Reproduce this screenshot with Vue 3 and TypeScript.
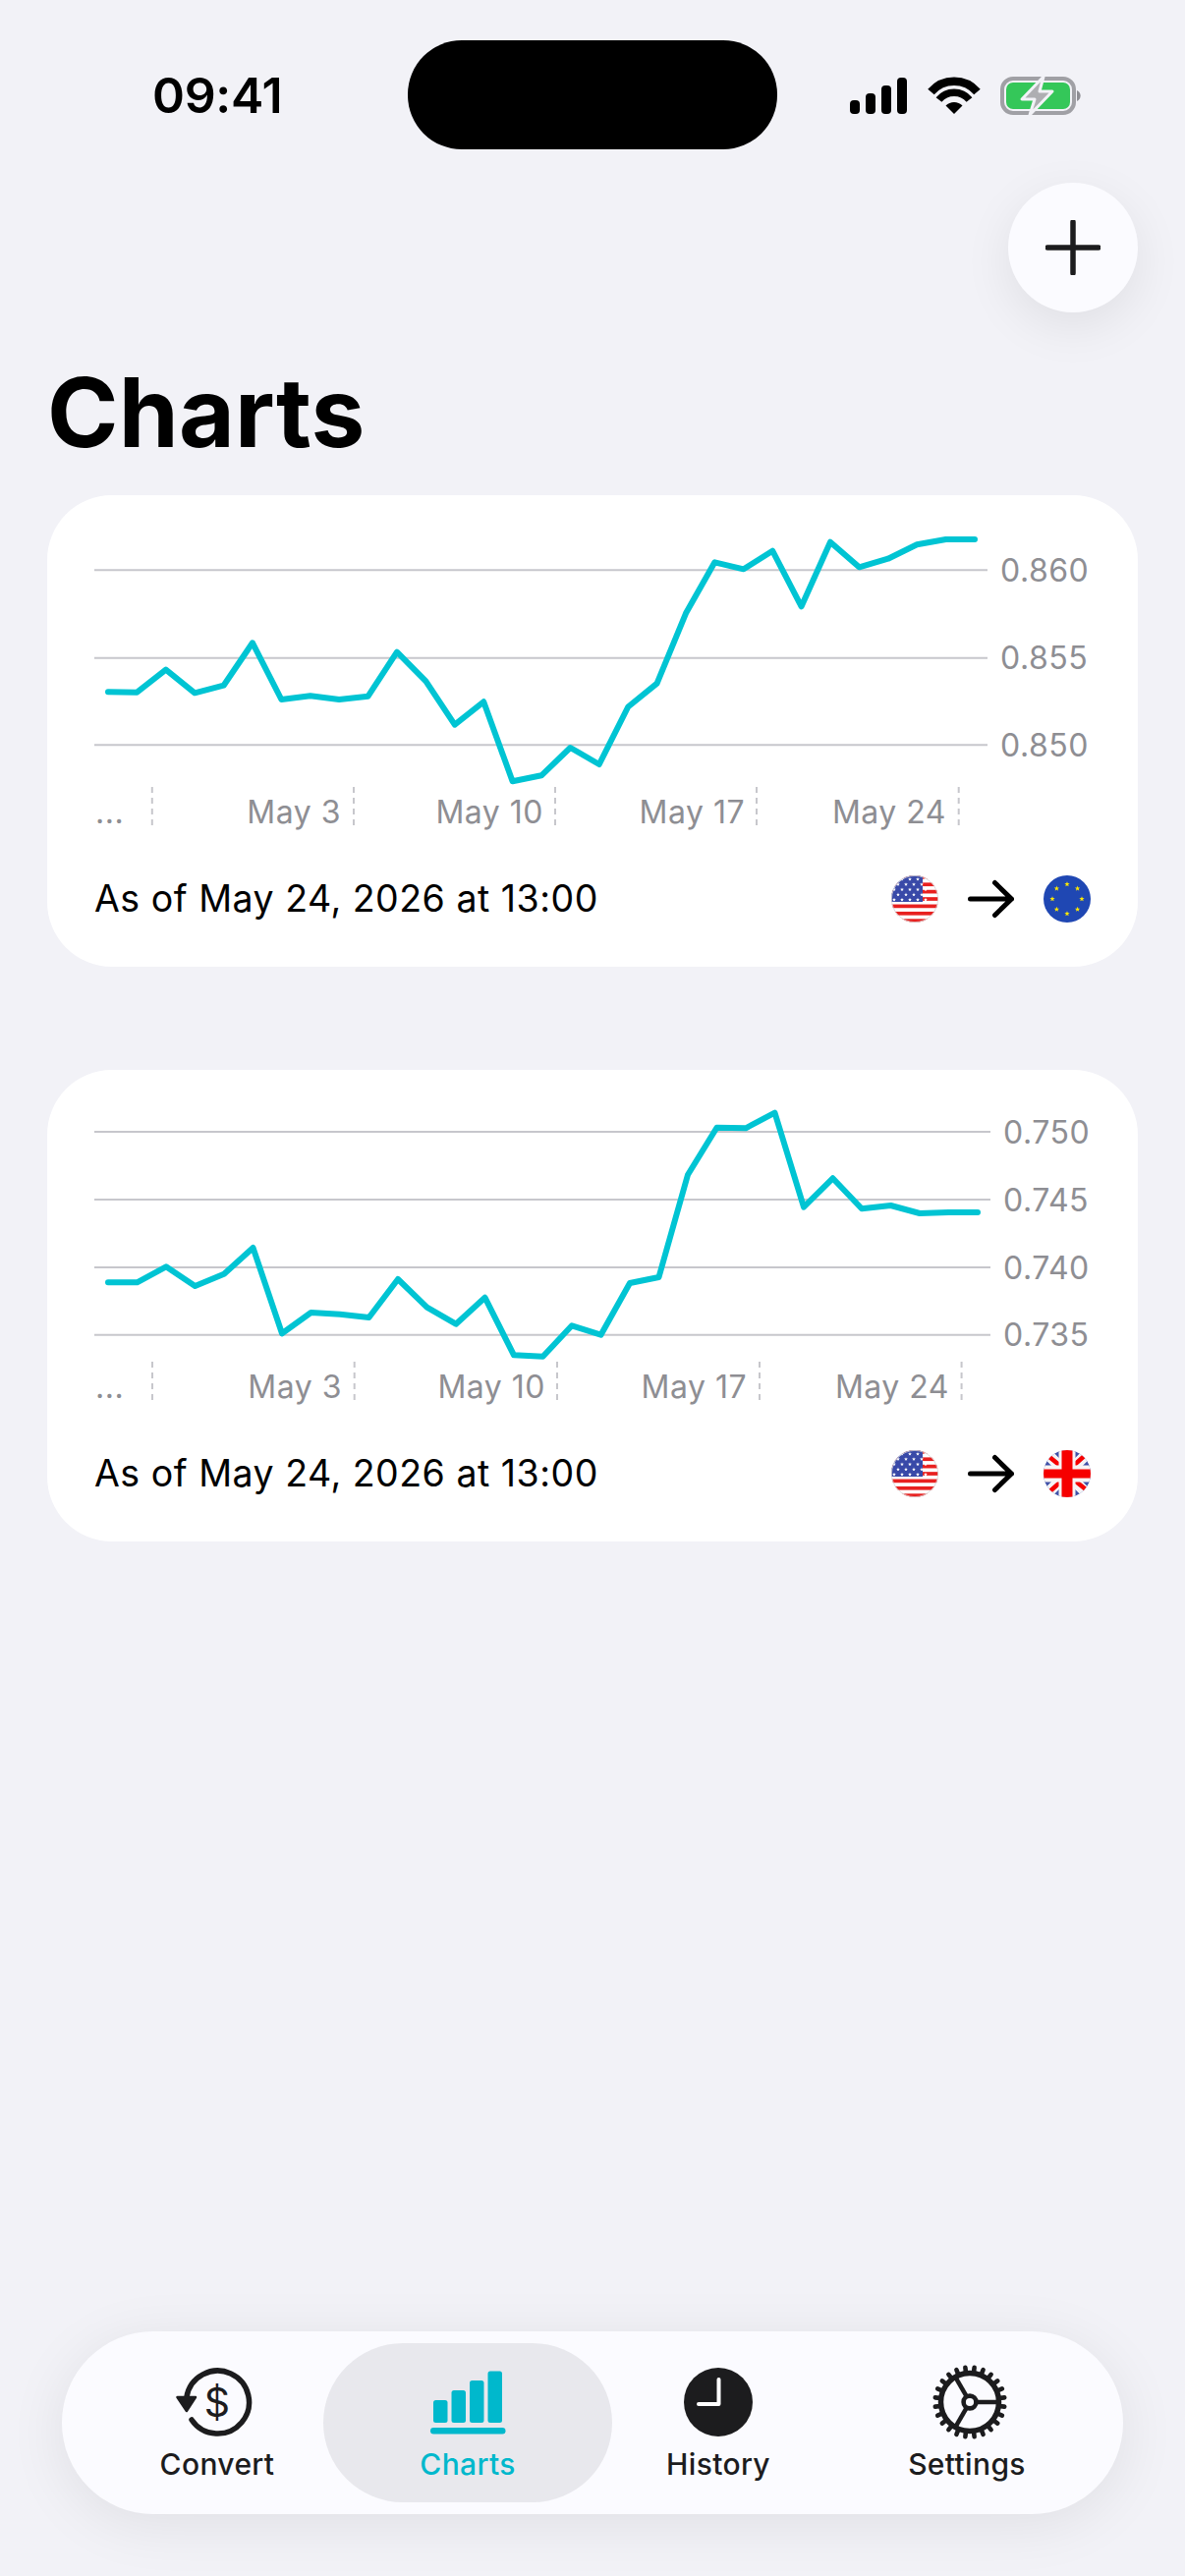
<script setup lang="ts">
interface ChartCard {
  grid: { y: number; label: string }[]
  gridEnd: number
  labelX: number
  line: number[]
  step: number
  ticks: number[]
  dates: { end: number; text: string }[]
  target: string
}

const toPoints = (ys: number[], step: number): string =>
  ys.map((y, i) => `${(62 + i * step).toFixed(1)},${y.toFixed(1)}`).join(' ')

const card1Y = [704.3, 704.7, 681.7, 705.3, 697.7, 654.3, 712, 708.3, 712, 708.7, 663.7, 693.3, 737.7, 714.3, 795.3, 789.3, 761, 778, 719.5, 695.7, 624.3, 572.3, 579.3, 560.7, 617.3, 551.7, 577.3, 568.7, 554.3, 549, 549].map((y) => y - 504)
const card2Y = [1305.3, 1305.3, 1289.3, 1309, 1296.7, 1270, 1357.3, 1336, 1337.7, 1341, 1302, 1330.7, 1347.7, 1320.7, 1379.3, 1380.7, 1349.3, 1358.7, 1306, 1300, 1195.7, 1147.7, 1148.3, 1132.7, 1228.7, 1199.3, 1230.3, 1227, 1235, 1234, 1234].map((y) => y - 1089)

const cards: ChartCard[] = [
  {
    grid: [
      { y: 76.3, label: '0.860' },
      { y: 165.7, label: '0.855' },
      { y: 254.3, label: '0.850' },
    ],
    gridEnd: 957,
    labelX: 970,
    line: card1Y,
    step: 29.4,
    ticks: [106.8, 312, 517, 722, 927.7],
    dates: [
      { end: 299, text: 'May 3' },
      { end: 505, text: 'May 10' },
      { end: 710, text: 'May 17' },
      { end: 915, text: 'May 24' },
    ],
    target: 'eu',
  },
  {
    grid: [
      { y: 63, label: '0.750' },
      { y: 132, label: '0.745' },
      { y: 201, label: '0.740' },
      { y: 269.7, label: '0.735' },
    ],
    gridEnd: 960,
    labelX: 973,
    line: card2Y,
    step: 29.5,
    ticks: [107, 312.7, 519, 725, 930.6],
    dates: [
      { end: 300, text: 'May 3' },
      { end: 507, text: 'May 10' },
      { end: 712, text: 'May 17' },
      { end: 918, text: 'May 24' },
    ],
    target: 'uk',
  },
]

const starPath = (cx: number, cy: number, r: number): string => {
  const pts: string[] = []
  for (let i = 0; i < 10; i++) {
    const rad = i % 2 === 0 ? r : r * 0.42
    const a = -Math.PI / 2 + (i * Math.PI) / 5
    pts.push(`${(cx + rad * Math.cos(a)).toFixed(2)},${(cy + rad * Math.sin(a)).toFixed(2)}`)
  }
  return `M${pts.join('L')}Z`
}

const usStars: string = (() => {
  let d = ''
  for (let row = 0; row < 5; row++) {
    const odd = row % 2 === 1
    const count = odd ? 4 : 5
    for (let c = 0; c < count; c++) {
      d += starPath((odd ? 7 : 3) + c * 8, 4 + row * 5.2, 2)
    }
  }
  return d
})()

const usRedStripes: number[] = [0, 1, 2, 3, 4, 5, 6].map((i) => i * 7.385)

const euStars: string = Array.from({ length: 8 }, (_, i) => {
  const a = (i * Math.PI) / 4
  return starPath(24 + 15 * Math.sin(a), 24 - 15 * Math.cos(a), 2.8)
}).join('')

const gearTeeth: number[] = Array.from({ length: 24 }, (_, i) => i * 15)
const gearSpokes: number[] = [90, 210, 330]

const tabs = ['Convert', 'Charts', 'History', 'Settings']
</script>

<template>
  <div class="page">
    <header class="status">
      <span class="time">09:41</span>
      <div class="island"></div>
      <svg class="status-icons" width="240" height="44" viewBox="0 0 240 44">
        <rect x="0" y="23" width="10" height="14" rx="4" />
        <rect x="16" y="16" width="10" height="21" rx="4" />
        <rect x="32" y="8" width="10" height="29" rx="4" />
        <rect x="48" y="0" width="10" height="37" rx="4" />
        <g fill="none" stroke="#000" stroke-linecap="butt">
          <path d="M82.5 14.5 A31 31 0 0 1 129.5 14.5" stroke-width="8.5" />
          <path d="M90.5 22.5 A20 20 0 0 1 121.5 22.5" stroke-width="7.5" />
        </g>
        <path d="M106 37 L97.5 28.5 A12 12 0 0 1 114.5 28.5 Z" />
        <rect x="155" y="1" width="73" height="35" rx="11" fill="none" stroke="#a0a0a5" stroke-width="4" />
        <rect x="159" y="5" width="65" height="27" rx="7" fill="#34c759" />
        <path d="M231 13 A6 6 0 0 1 231 24 Z" fill="#8e8e93" />
        <path d="M197 -1 L175 22 L188 22 L183 38 L206 14 L193 14 Z" fill="#aeaeb2" stroke="#f2f2f7" stroke-width="3" stroke-linejoin="round" />
      </svg>
    </header>

    <button class="add" type="button" aria-label="Add">
      <svg width="56" height="56" viewBox="0 0 56 56">
        <path d="M28 2V54M2 28H54" stroke="#1c1c1e" stroke-width="5.5" stroke-linecap="round" />
      </svg>
    </button>

    <h1 class="title">Charts</h1>

    <section class="cards">
      <article v-for="card in cards" :key="card.target" class="card">
        <svg class="chart" width="1110" height="360" viewBox="0 0 1110 360">
          <g v-for="g in card.grid" :key="g.label">
            <line x1="48" :x2="card.gridEnd" :y1="g.y" :y2="g.y" stroke="#c7c7cc" stroke-width="2" />
            <text class="axis" :x="card.labelX" :y="g.y + 11.5">{{ g.label }}</text>
          </g>
          <line
            v-for="t in card.ticks"
            :key="t"
            :x1="t"
            :x2="t"
            y1="297"
            y2="339"
            stroke="#c7c7cc"
            stroke-width="2"
            stroke-dasharray="6 5"
          />
          <text class="axis" x="49" y="333.7">...</text>
          <text
            v-for="d in card.dates"
            :key="d.text"
            class="axis"
            text-anchor="end"
            :x="d.end"
            y="333.7"
          >{{ d.text }}</text>
          <polyline
            :points="toPoints(card.line, card.step)"
            fill="none"
            stroke="#00c4d3"
            stroke-width="6"
            stroke-linecap="round"
            stroke-linejoin="round"
          />
        </svg>
        <footer class="card-foot">
          <span class="asof">As of May 24, 2026 at 13:00</span>
          <div class="pair">
            <svg width="48" height="48" viewBox="0 0 48 48">
              <defs>
                <clipPath :id="'us-' + card.target"><circle cx="24" cy="24" r="24" /></clipPath>
              </defs>
              <g :clip-path="`url(#us-${card.target})`">
                <rect width="48" height="48" fill="#fff" />
                <rect v-for="s in usRedStripes" :key="s" x="0" :y="s" width="48" height="3.7" fill="#e8201f" />
                <rect width="32" height="27" fill="#3949a8" />
                <path :d="usStars" fill="#fff" />
              </g>
              <circle cx="24" cy="24" r="23.6" fill="none" stroke="#d5d5d8" stroke-width="0.8" />
            </svg>
            <svg class="arrow" width="47" height="40" viewBox="0 0 47 40">
              <path d="M2.5 20H44.5M27.5 3.5L44.5 20L27.5 36.5" fill="none" stroke="#000" stroke-width="5" stroke-linecap="round" stroke-linejoin="round" />
            </svg>
            <svg v-if="card.target === 'eu'" width="48" height="48" viewBox="0 0 48 48">
              <circle cx="24" cy="24" r="24" fill="#1f47b3" />
              <path :d="euStars" fill="#ffe900" />
            </svg>
            <svg v-else width="48" height="48" viewBox="0 0 48 48">
              <defs>
                <clipPath id="uk-clip"><circle cx="24" cy="24" r="24" /></clipPath>
              </defs>
              <g clip-path="url(#uk-clip)">
                <rect width="48" height="48" fill="#3f51a8" />
                <path d="M0 0L48 48M48 0L0 48" stroke="#f4f4f6" stroke-width="11" />
                <path d="M0 2L22 20M46 2L28 18M2 46L20 30M48 44L28 28" stroke="#f60000" stroke-width="4.5" />
                <path d="M24 0V48M0 24H48" stroke="#f8f4f4" stroke-width="17" />
                <path d="M24 0V48" stroke="#f60000" stroke-width="11" />
                <path d="M0 24H48" stroke="#f60000" stroke-width="9" />
              </g>
            </svg>
          </div>
        </footer>
      </article>
    </section>

    <nav class="tabbar">
      <div
        v-for="tab in tabs"
        :key="tab"
        class="tab"
        :class="{ active: tab === 'Charts' }"
      >
        <svg v-if="tab === 'Convert'" class="tab-icon" width="84" height="76" viewBox="0 0 84 76">
          <path d="M16 56 A32 32 0 1 0 10.9 33" fill="none" stroke="#1c1c1e" stroke-width="5.5" stroke-linecap="round" />
          <path d="M1.5 33H20L10.9 47Z" fill="#1c1c1e" stroke="#1c1c1e" stroke-width="2.5" stroke-linejoin="round" />
          <text class="dollar" x="42" y="52.5" text-anchor="middle">$</text>
        </svg>
        <svg v-else-if="tab === 'Charts'" class="tab-icon" width="84" height="76" viewBox="0 0 84 76">
          <rect x="7" y="36" width="14.5" height="23" rx="2.5" />
          <rect x="25.5" y="26" width="14.5" height="33" rx="2.5" />
          <rect x="44" y="16" width="14.5" height="43" rx="2.5" />
          <rect x="62.5" y="6.5" width="14.5" height="52.5" rx="2.5" />
          <rect x="4" y="64" width="76.5" height="6.5" rx="3.25" />
        </svg>
        <svg v-else-if="tab === 'History'" class="tab-icon" width="84" height="76" viewBox="0 0 84 76">
          <ellipse cx="42" cy="38" rx="35" ry="35" fill="#1c1c1e" />
          <path d="M42.5 15V40H22" fill="none" stroke="#fff" stroke-width="4" stroke-linecap="round" stroke-linejoin="round" />
        </svg>
        <svg v-else class="tab-icon" width="84" height="76" viewBox="0 0 84 76">
          <g transform="translate(44 38)" stroke="#1c1c1e" fill="none">
            <circle r="29.5" stroke-width="5.5" />
            <line
              v-for="a in gearTeeth"
              :key="a"
              x1="0"
              y1="-30"
              x2="0"
              y2="-35.5"
              stroke-width="4.6"
              stroke-linecap="round"
              :transform="`rotate(${a + 7.5})`"
            />
            <line
              v-for="a in gearSpokes"
              :key="a"
              x1="0"
              y1="-7"
              x2="0"
              y2="-29"
              stroke-width="4.5"
              :transform="`rotate(${a})`"
            />
            <circle r="6.4" stroke-width="4.6" />
          </g>
        </svg>
        <span class="tab-label">{{ tab }}</span>
      </div>
    </nav>
  </div>
</template>

<style scoped>
.page {
  position: relative;
  width: 1206px;
  height: 2622px;
  display: flex;
  flex-direction: column;
  overflow: hidden;
  background: #f2f2f7;
  font-family: Inter, "Liberation Sans", sans-serif;
  color: #000;
}
.status {
  display: flex;
  align-items: center;
  height: 111px;
  margin-top: 41px;
  flex: none;
}
.time {
  flex: none;
  width: 415px;
  padding-left: 155px;
  box-sizing: border-box;
  font-size: 50px;
  font-weight: 600;
  line-height: 60px;
  letter-spacing: -0.3px;
}
.island {
  width: 376px;
  height: 111px;
  border-radius: 55px;
  background: #000;
  flex: none;
}
.status-icons {
  margin-left: 74px;
  margin-top: 9px;
  overflow: visible;
  flex: none;
}
.add {
  align-self: flex-end;
  flex: none;
  width: 132px;
  height: 132px;
  margin: 34px 48px 0 0;
  padding: 0;
  border: 0;
  border-radius: 50%;
  background: #fbfbff;
  box-shadow: 0 14px 50px rgba(0, 0, 0, 0.08);
  display: flex;
  align-items: center;
  justify-content: center;
}
.title {
  margin: 40px 0 22px 48px;
  font-size: 98px;
  line-height: 124px;
  font-weight: 700;
  letter-spacing: 0.2px;
  flex: none;
}
.cards {
  display: flex;
  flex-direction: column;
  gap: 105px;
  margin: 0 48px;
  flex: none;
}
.card {
  height: 480px;
  border-radius: 66px;
  background: #fff;
}
.chart {
  display: block;
}
.axis {
  font-size: 32px;
  letter-spacing: 0.5px;
  fill: #8e8e93;
}
.card-foot {
  display: flex;
  align-items: center;
  justify-content: space-between;
  height: 102px;
  padding: 0 48px;
}
.asof {
  font-size: 37.5px;
  line-height: 48px;
  letter-spacing: 0.5px;
}
.pair {
  display: flex;
  align-items: center;
  gap: 30px;
}
.tabbar {
  margin: auto 63px 63px;
  height: 186px;
  box-sizing: border-box;
  padding: 12px 30.5px;
  border-radius: 93px;
  background: #fbfbff;
  box-shadow: 0 10px 60px rgba(0, 0, 0, 0.08);
  display: grid;
  grid-template-columns: 255px 255px 255px 254px;
  flex: none;
  isolation: isolate;
}
.tab {
  position: relative;
  display: flex;
  flex-direction: column;
  align-items: center;
  padding-top: 22px;
  color: #1c1c1e;
}
.tab:last-child {
  margin-right: 3px;
}
.tab:last-child .tab-icon {
  transform: translateX(1px);
}
.tab.active {
  color: #00b8cc;
  fill: #00b8cc;
}
.tab.active::before {
  content: "";
  position: absolute;
  inset: 0 -19px 0 -20px;
  border-radius: 81px;
  background: #e8e8ed;
  z-index: -1;
}
.tab-icon {
  display: block;
}
.dollar {
  font-size: 41px;
  font-weight: 400;
  fill: #1c1c1e;
}
.tab-label {
  font-size: 30px;
  line-height: 36px;
  font-weight: 500;
  letter-spacing: 0.35px;
  margin-top: 7px;
}
</style>

<style>
html, body { margin: 0; background: #f2f2f7; }
</style>
